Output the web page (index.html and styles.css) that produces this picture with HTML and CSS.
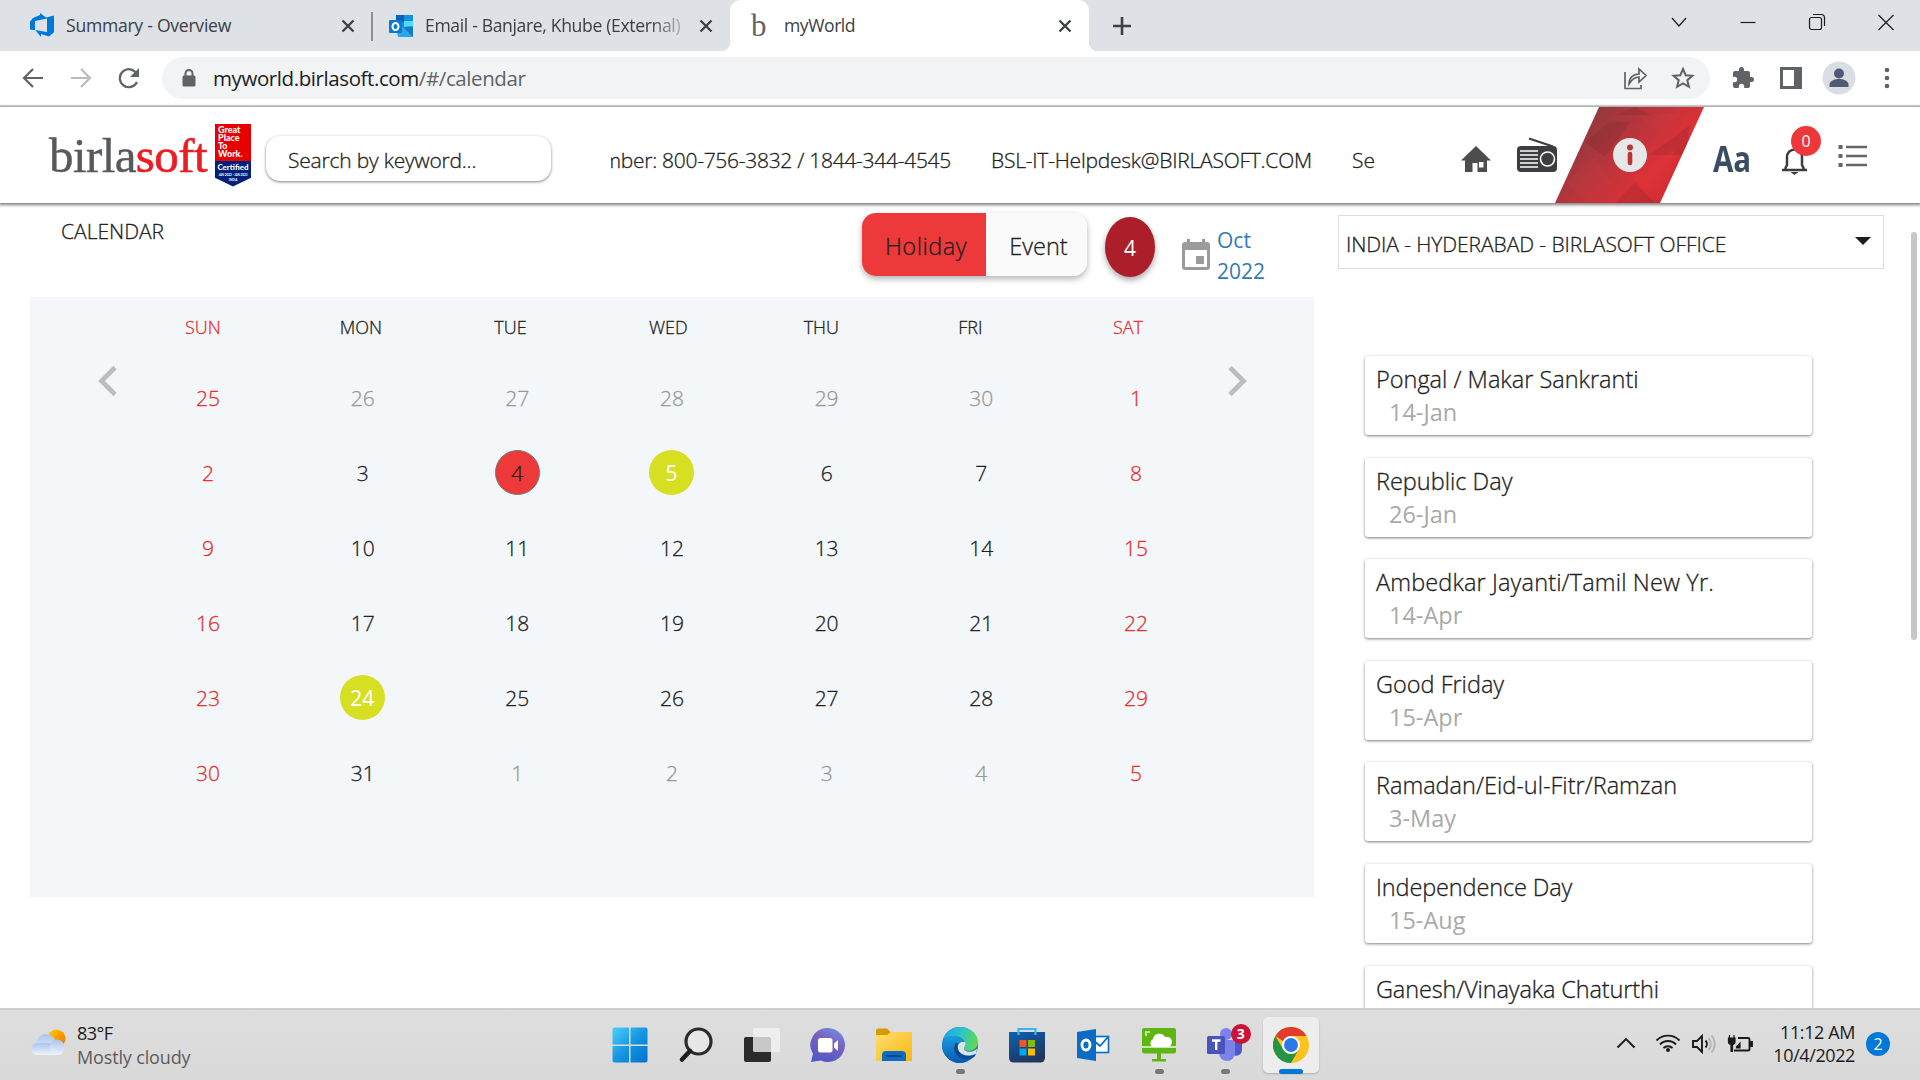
FILE: index.html
```html
<!DOCTYPE html>
<html lang="en">
<head>
<meta charset="utf-8">
<title>myWorld</title>
<link rel="stylesheet" href="styles.css">
</head>
<body>
<div class="tabs">
  <div class="tab tab-first">
    <svg class="fav" width="26" height="26" viewBox="0 0 26 26"><path fill="#0078d7" d="M1 8.500 4 5l7-3V0l6 4.500L25 2.500v16.800l-5 4.200-8-2.600V24l-5.500-6.800L1 16.500zM6 8v9l12 2V5.500z"/></svg>
    <span class="tab-title s-sum">Summary - Overview</span>
    <svg class="x" width="14" height="14" viewBox="0 0 14 14"><path d="M1.500 1.500l11 11M12.500 1.500l-11 11"/></svg>
  </div>
  <div class="tab tab-second">
    <svg class="fav" width="25" height="24" viewBox="0 0 25 24"><rect x="7" y="1" width="17" height="13" fill="#1490df"/><rect x="7" y="1" width="8" height="7" fill="#0364b8"/><rect x="15" y="7" width="9" height="7" fill="#50d9ff"/><path fill="#28a8ea" d="M7 13h17v10H9z"/><path fill="#0a5dae" d="M14 13l10 10V12z" opacity=".6"/><rect y="6" width="13" height="13" rx="1" fill="#0f78d4"/><ellipse cx="6.500" cy="12.500" rx="3" ry="3.500" fill="none" stroke="#fff" stroke-width="2"/></svg>
    <span class="tab-title fade s-mail">Email - Banjare, Khube (External)</span>
    <svg class="x" width="14" height="14" viewBox="0 0 14 14"><path d="M1.500 1.500l11 11M12.500 1.500l-11 11"/></svg>
  </div>
  <div class="tab tab-active">
    <span class="fav-b">b</span>
    <span class="tab-title s-my">myWorld</span>
    <svg class="x" width="14" height="14" viewBox="0 0 14 14"><path d="M1.500 1.500l11 11M12.500 1.500l-11 11"/></svg>
  </div>
  <svg class="plus" width="18" height="18" viewBox="0 0 18 18"><path d="M9 0v18M0 9h18" stroke="#3c4043" stroke-width="2.600"/></svg>
  <div class="winctl">
    <svg width="20" height="20" viewBox="0 0 20 20"><path d="M3 6l7 8 7-8"/></svg>
    <svg width="20" height="20" viewBox="0 0 20 20"><path d="M2.500 10.500h15"/></svg>
    <svg width="20" height="20" viewBox="0 0 20 20"><rect x="2.500" y="5.500" width="12" height="12" rx="2"/><path d="M6 2.500h8a3.500 3.500 0 0 1 3.500 3.500v8"/></svg>
    <svg width="20" height="20" viewBox="0 0 20 20"><path d="M2.500 3l15 15M17.500 3l-15 15"/></svg>
  </div>
</div>

<div class="toolbar">
  <svg class="nav" width="24" height="24" viewBox="0 0 24 24"><path d="M22 12H4M12 3l-9 9 9 9"/></svg>
  <svg class="nav dim" width="24" height="24" viewBox="0 0 24 24"><path d="M2 12h18M12 3l9 9-9 9"/></svg>
  <svg class="nav" width="24" height="24" viewBox="0 0 24 24"><path d="M20 16a9 9 0 1 1-.5-8.500"/><path d="M22 2v9h-9z" fill="#5f6368" stroke="none"/></svg>
  <div class="omnibox">
    <svg width="14" height="18" viewBox="0 0 14 18"><rect x="0.500" y="6.500" width="13" height="11" rx="1.500" fill="#5f6368"/><path d="M3.500 7V4.500a3.500 3.500 0 0 1 7 0V7" fill="none" stroke="#5f6368" stroke-width="2"/></svg>
    <span class="url">myworld.birlasoft.com<span class="path">/#/calendar</span></span>
    <svg class="share" width="25" height="24" viewBox="0 0 25 24"><path d="M2 6v16.500h16V19M6 18c0-6 4-10 10-10V3l7 6.500-7 6.500v-5c-4 0-7 2-10 7z" fill="none" stroke="#5f6368" stroke-width="1.700"/></svg>
    <svg width="24" height="24" viewBox="0 0 24 24"><path d="M12 3l2.700 6.200 6.700.6-5.100 4.400 1.600 6.600L12 17.300l-5.900 3.500 1.600-6.600-5.100-4.400 6.700-.6z" fill="none" stroke="#5f6368" stroke-width="2"/></svg>
  </div>
  <svg class="ext" width="24" height="24" viewBox="0 0 24 24"><path fill="#5f6368" d="M20.500 11H19V7c0-1.100-.9-2-2-2h-4V3.500a2.500 2.500 0 0 0-5 0V5H4c-1.100 0-2 .9-2 2v3.800h1.500a2.700 2.700 0 0 1 0 5.400H2V20c0 1.100.9 2 2 2h3.800v-1.500a2.700 2.700 0 0 1 5.400 0V22H17c1.100 0 2-.9 2-2v-4h1.500a2.500 2.500 0 0 0 0-5z"/></svg>
  <svg class="panelbtn" width="22" height="22" viewBox="0 0 22 22"><path fill="#5f6368" fill-rule="evenodd" d="M0 0h22v22H0zM3 3v16h11V3z"/></svg>
  <svg class="avatar" width="34" height="34" viewBox="0 0 34 34"><circle cx="17" cy="17" r="16.500" fill="#dadde4"/><circle cx="17" cy="12.500" r="5" fill="#4f5b73"/><path d="M7.500 26v-2.500c0-3.500 5-5.500 9.500-5.500s9.500 2 9.500 5.500V26z" fill="#4f5b73"/></svg>
  <svg class="dots" width="6" height="22" viewBox="0 0 6 22" fill="#5f6368"><circle cx="3" cy="3" r="2.300"/><circle cx="3" cy="11" r="2.300"/><circle cx="3" cy="19" r="2.300"/></svg>
</div>

<header class="head">
  <div class="logo">birla<b>soft</b></div>
  <div class="gptw"><div class="g-red">Great<br>Place<br>To<br>Work.</div><div class="g-blue"><b>Certified</b><i>JAN 2022 - JAN 2023</i><i>INDIA</i></div></div>
  <div class="search">Search by keyword...</div>
  <div class="marquee"><div class="mq"><span class="s-num">mber: 800-756-3832 / 1844-344-4545</span><span class="s-bsl">BSL-IT-Helpdesk@BIRLASOFT.COM</span><span class="s-se">Se</span></div></div>
  <svg class="home" width="30" height="26" viewBox="0 0 30 26"><path fill="#4d4d4f" fill-rule="evenodd" d="M15 0 30 14.500h-4V26h-9.500V17H11.500v9H4V14.500H0zM18 16v5.500h4.500V16z"/></svg>
  <svg class="radio" width="42" height="36" viewBox="0 0 42 36"><path d="M13 1.500l24 8" stroke="#3d3d3f" stroke-width="2.200"/><rect x="1" y="9" width="40" height="26" rx="4" fill="#3d3d3f"/><path d="M4 14h18M4 18h18M4 22h18M4 26h18M4 30h18" stroke="#fff" stroke-width="1.700"/><circle cx="31.500" cy="22" r="7" fill="none" stroke="#fff" stroke-width="1.600"/></svg>
  <svg class="ribbon" width="150" height="96" viewBox="0 0 150 96"><defs><linearGradient id="rb" x1="0" y1="0" x2="1" y2=".55"><stop offset=".15" stop-color="#8a3a40"/><stop offset=".5" stop-color="#b7353b"/><stop offset=".8" stop-color="#dd3037"/><stop offset="1" stop-color="#c92a31"/></linearGradient><clipPath id="rc"><path d="M44 0h105L105 96H0z"/></clipPath></defs><g clip-path="url(#rc)"><rect width="150" height="96" fill="url(#rb)"/><path d="M30 35l25-20 20 0-25 35zM95 48l40-30-5 30zM60 96l20-20 20 20zM60 8h36L80 0z" fill="#6b2228" opacity=".2"/><path d="M75 70l45-30-10 56zM85 10l22 20 20-25zM10 75l30-25 20 30-30 16z" fill="#f0484d" opacity=".1"/></g><circle cx="75" cy="48" r="17" fill="#e6e7e8"/><circle cx="75" cy="40.500" r="3" fill="#c0323a"/><path d="M75 47v9" stroke="#c0323a" stroke-width="4.600" stroke-linecap="round"/></svg>
  <span class="aa">Aa</span>
  <div class="bell">
    <svg width="27" height="30" viewBox="0 0 27 30"><path d="M1 25h25M4.500 25v-2l1.500-3v-8a7.500 7.500 0 0 1 15 0v8l1.500 3v2" fill="none" stroke="#3d3d3f" stroke-width="2.500"/><path d="M9.500 27h8l-4 3z" fill="#3d3d3f"/></svg>
    <span class="count">0</span>
  </div>
  <svg class="list" width="29" height="26" viewBox="0 0 29 26" fill="none" stroke="#666"><path d="M8 4h21M8 13h21M8 22h21" stroke-width="2.400"/><path d="M.5 4h4M.5 13h4M.5 22h4" stroke-width="4"/></svg>
</header>

<main class="page">
  <section class="left">
    <div class="bar">
      <span class="heading">CALENDAR</span>
      <div class="toggle"><span class="on">Holiday</span><span class="off">Event</span></div>
      <div class="today">4</div>
      <svg class="calicon" width="28" height="31" viewBox="0 0 28 31"><path fill="#9b9b9b" fill-rule="evenodd" d="M5 0h3v3h12V0h3v3h2a3 3 0 0 1 3 3v22a3 3 0 0 1-3 3H3a3 3 0 0 1-3-3V6a3 3 0 0 1 3-3h2zM3 11v17h22V11z"/><rect x="14" y="17" width="8" height="8" fill="#9b9b9b"/></svg>
      <div class="month">Oct<br>2022</div>
    </div>
    <div class="calendar">
      <svg class="prev" width="19" height="30" viewBox="0 0 19 30"><path d="M17 1.500L3.500 15 17 28.500" fill="none" stroke="#bdbdbd" stroke-width="4.800"/></svg>
      <div class="month-grid">
        <div class="week names"><span class="r">SUN</span><span>MON</span><span>TUE</span><span>WED</span><span>THU</span><span>FRI</span><span class="r">SAT</span></div>
        <div class="week"><span class="r">25</span><span class="o">26</span><span class="o">27</span><span class="o">28</span><span class="o">29</span><span class="o">30</span><span class="r">1</span></div>
        <div class="week"><span class="r">2</span><span>3</span><span class="now">4</span><span class="hol">5</span><span>6</span><span>7</span><span class="r">8</span></div>
        <div class="week"><span class="r">9</span><span>10</span><span>11</span><span>12</span><span>13</span><span>14</span><span class="r">15</span></div>
        <div class="week"><span class="r">16</span><span>17</span><span>18</span><span>19</span><span>20</span><span>21</span><span class="r">22</span></div>
        <div class="week"><span class="r">23</span><span class="hol">24</span><span>25</span><span>26</span><span>27</span><span>28</span><span class="r">29</span></div>
        <div class="week"><span class="r">30</span><span>31</span><span class="o">1</span><span class="o">2</span><span class="o">3</span><span class="o">4</span><span class="r">5</span></div>
      </div>
      <svg class="next" width="19" height="30" viewBox="0 0 19 30"><path d="M2 1.500L15.500 15 2 28.500" fill="none" stroke="#bdbdbd" stroke-width="4.800"/></svg>
    </div>
  </section>
  <aside class="right">
    <div class="select"><span>INDIA - HYDERABAD - BIRLASOFT OFFICE</span><svg width="16" height="8" viewBox="0 0 16 8"><path d="M0 0h16L8 8z" fill="#1d1d1d"/></svg></div>
    <div class="cards">
      <div class="card"><span>Pongal / Makar Sankranti</span><small>14-Jan</small></div>
      <div class="card"><span>Republic Day</span><small>26-Jan</small></div>
      <div class="card"><span class="wide">Ambedkar Jayanti/Tamil New Yr.</span><small>14-Apr</small></div>
      <div class="card"><span>Good Friday</span><small>15-Apr</small></div>
      <div class="card"><span>Ramadan/Eid-ul-Fitr/Ramzan</span><small>3-May</small></div>
      <div class="card"><span class="tight">Independence Day</span><small>15-Aug</small></div>
      <div class="card"><span class="tight">Ganesh/Vinayaka Chaturthi</span></div>
    </div>
  </aside>
  <div class="scroll"></div>
</main>

<footer class="taskbar">
  <div class="weather">
    <svg width="36" height="28" viewBox="0 0 36 28"><defs><linearGradient id="sun" x1="0" y1="0" x2="1" y2="1"><stop offset="0" stop-color="#ffd000"/><stop offset="1" stop-color="#f06a00"/></linearGradient><linearGradient id="cl" x1="0" y1="0" x2="0" y2="1"><stop offset="0" stop-color="#a9c6ee"/><stop offset="1" stop-color="#eef3fa"/></linearGradient></defs><circle cx="25.500" cy="9.500" r="9" fill="url(#sun)"/><circle cx="15" cy="15" r="10" fill="url(#cl)"/><rect x="0" y="14" width="33" height="12" rx="6" fill="url(#cl)"/><circle cx="26" cy="18" r="7.500" fill="url(#cl)"/></svg>
    <div class="wtext"><span class="s-f">83°F</span><span class="wdesc">Mostly cloudy</span></div>
  </div>
  <div class="apps">
    <span class="app"><svg width="36" height="36" viewBox="0 0 36 36"><defs><linearGradient id="w" x1="0" y1="0" x2="1" y2="1"><stop offset="0" stop-color="#4fd0ff"/><stop offset=".5" stop-color="#1596e2"/><stop offset="1" stop-color="#0072cf"/></linearGradient></defs><path fill="url(#w)" d="M2.500 .5h14.500v17H.5v-15a2 2 0 0 1 2-2zM18.500.5h15a2 2 0 0 1 2 2v15h-17zM.5 19h16.500v16.500h-14.500a2 2 0 0 1-2-2zM18.500 19h17v14.500a2 2 0 0 1-2 2h-15z"/></svg></span>
    <span class="app"><svg width="36" height="36" viewBox="0 0 36 36"><circle cx="20.500" cy="14.500" r="12.500" fill="#e6e6e6" stroke="#2b2b2b" stroke-width="3.200"/><path d="M12 24l-8 8.500" stroke="#1d1d1d" stroke-width="4.600" stroke-linecap="round"/></svg></span>
    <span class="app"><svg width="36" height="36" viewBox="0 0 36 36"><rect x="0" y="10" width="27" height="25" rx="2" fill="#2b2b2b"/><rect x="9" y="1" width="27" height="24" rx="1.500" fill="#f4f4f4" opacity=".78"/></svg></span>
    <span class="app"><svg width="36" height="36" viewBox="0 0 36 36"><defs><linearGradient id="ch" x1=".8" y1="0" x2=".3" y2="1"><stop offset="0" stop-color="#6f8fe8"/><stop offset=".4" stop-color="#7a62bd"/><stop offset="1" stop-color="#5158c8"/></linearGradient></defs><path fill="url(#ch)" d="M18 1a17 17 0 1 1-7 32.500L1 35l2-8A17 17 0 0 1 18 1z"/><rect x="8" y="11" width="14.500" height="14.500" rx="2.500" fill="#fff"/><path d="M24 16.500l4-3.500v11l-4-3.500z" fill="#fff"/></svg></span>
    <span class="app"><svg width="36" height="36" viewBox="0 0 36 36"><defs><linearGradient id="fo" x1="0" y1="0" x2="1" y2="1"><stop offset="0" stop-color="#ffdd70"/><stop offset="1" stop-color="#f9b80f"/></linearGradient></defs><path d="M0 4a2.500 2.500 0 0 1 2.500-2.500H11l4 4h19a2 2 0 0 1 2 2V12H0z" fill="#d99a00"/><path d="M0 8h11l4-3h21v29H0z" fill="url(#fo)"/><path d="M6 34v-6a4 4 0 0 1 4-4h16a4 4 0 0 1 4 4v6z" fill="#0a6cc4"/><path d="M11 29h14" stroke="#06427f" stroke-width="2" stroke-linecap="round"/></svg></span>
    <span class="app run"><svg width="36" height="36" viewBox="0 0 36 36"><defs><linearGradient id="e1" x1="0" y1=".3" x2="1" y2=".5"><stop offset="0" stop-color="#1fa4e8"/><stop offset=".5" stop-color="#2cc5c9"/><stop offset="1" stop-color="#63d94a"/></linearGradient><linearGradient id="e2" x1="0" y1="0" x2="0" y2="1"><stop offset="0" stop-color="#1b9de2"/><stop offset="1" stop-color="#0a58b0"/></linearGradient></defs><circle cx="18" cy="18" r="18" fill="#0d74cf"/><path d="M1 13C3 5 10 0 18 0c10 0 18 7 18 15 0 6-5 9-9 9-3 0-5-1-5-2.500 0-1 1-1.500 1-4C23 13 18 9 12 9 6 9 3 11 1 13z" fill="url(#e1)"/><path d="M.5 15C2 11.500 6 9 11 9c6 0 11 4 11 7-6-2-9 2-8.500 6 .5 7 7 11 13 11-3 2-6 3-8.500 3C8 36 0 28 0 18z" fill="url(#e2)"/><path d="M14 16c-2 2-3 6 0 11 4 6 12 7 18 3 1.500-1.300 2-3 2-3-8 4-14 1-17-3-2-3-1.500-6-1-8z" fill="#0c4a94"/><path d="M23 15c1.500 3-1 5-1 6.500 0 2 3 3.500 6 3.200 3 0 5.500-1.700 7-3.200l-.8 5c-7 3.500-13.500 2.500-17-2-2.500-4-1.500-8 2-9.500z" fill="#dfe2e4"/></svg></span>
    <span class="app"><svg width="36" height="36" viewBox="0 0 36 36"><defs><linearGradient id="st" x1="0" y1="0" x2=".5" y2="1"><stop offset="0" stop-color="#0b62b4"/><stop offset="1" stop-color="#20365f"/></linearGradient></defs><path d="M0 5h36v26a4.500 4.500 0 0 1-4.500 4.500h-27A4.500 4.500 0 0 1 0 31z" fill="url(#st)"/><path d="M9.500 8V2h17v6" fill="none" stroke="#35b6f2" stroke-width="2.200"/><path d="M10.500 13h7v7h-7z" fill="#f35325"/><path d="M19 13h7v7h-7z" fill="#81bc06"/><path d="M10.500 21.500h7v7h-7z" fill="#05a6f0"/><path d="M19 21.500h7v7h-7z" fill="#ffba08"/></svg></span>
    <span class="app"><svg width="36" height="36" viewBox="0 0 36 36"><rect x="18" y="9.500" width="15.500" height="16" fill="#fff" stroke="#0a6cc4" stroke-width="1.600"/><path d="M18 13l7 6 8-9" fill="none" stroke="#0a6cc4" stroke-width="1.800"/><path d="M2 5l19-3v32L2 31z" fill="#0a6cc4"/><ellipse cx="11" cy="18" rx="4" ry="5" fill="none" stroke="#fff" stroke-width="2.800"/></svg></span>
    <span class="app run"><svg width="36" height="36" viewBox="0 0 36 36"><rect x="1" y="1" width="34" height="25.500" rx="2" fill="#5fb613"/><path d="M1 20h34" stroke="#cde6b5" stroke-width="2"/><path d="M5 9V5h4" stroke="#e4f2d6" stroke-width="1.600" fill="none"/><path d="M11 20a5 5 0 0 1 1-8 6.500 6.500 0 0 1 12-2 5.200 5.200 0 0 1 3.500 10z" fill="#fff"/><path d="M16 26h4v6h5v2.500H11V32h5z" fill="#5fb613"/></svg></span>
    <span class="app run"><svg width="36" height="36" viewBox="0 0 36 36"><circle cx="19" cy="7" r="6" fill="#7b83eb"/><path d="M26 12h9v11a6 6 0 0 1-9 5z" fill="#5059c9"/><path d="M12 13h16v13a8 8 0 0 1-16 0z" fill="#7b83eb"/><rect x="0" y="9" width="18" height="18" rx="1.500" fill="#4b53bc"/><path d="M5 13.500h8.500M9.200 13.500V23" stroke="#fff" stroke-width="2.400"/></svg><span class="tb">3</span></span>
    <span class="app run current"><svg width="36" height="36" viewBox="0 0 36 36"><circle cx="18" cy="18" r="18" fill="#fcc31e"/><path d="M2.400 9A18 18 0 0 1 33.600 9H18a9 9 0 0 0-8 5z" fill="#e33b2e"/><path d="M2.400 9A18 18 0 0 0 18 36l7.800-13.500A9 9 0 0 1 10.200 22.500z" fill="#229443"/><circle cx="18" cy="18" r="9" fill="#fff"/><circle cx="18" cy="18" r="7" fill="#2b79e8"/></svg></span>
  </div>
  <div class="tray">
    <svg class="up" width="20" height="12" viewBox="0 0 20 12"><path d="M1.500 10.500L10 2l8.500 8.500"/></svg>
    <svg class="wifi" width="26" height="20" viewBox="0 0 26 20"><path d="M1.500 7.500a16 16 0 0 1 23 0M5 11.500a11 11 0 0 1 16 0M8.500 15a6.500 6.500 0 0 1 9 0"/><circle cx="13" cy="17" r="2" fill="#1b1b1b" stroke="none"/></svg>
    <svg class="vol" width="26" height="20" viewBox="0 0 26 20"><path d="M2 7h4l5-5v16l-5-5H2zM14.500 6.500a5 5 0 0 1 0 7"/><path d="M17.500 4a9 9 0 0 1 0 12M20.500 1.500a13 13 0 0 1 0 17" stroke="#b5b5b5"/></svg>
    <svg class="bat" width="26" height="20" viewBox="0 0 26 20"><path d="M11 4h10a1.500 1.500 0 0 1 1.500 1.500v9A1.500 1.500 0 0 1 21 16.500H7"/><path d="M23 8h2v4h-2z" fill="#1b1b1b"/><path d="M1.500 4h6.500v3.500a3 3 0 0 1-2.500 3v7H4v-7a3 3 0 0 1-2.500-3zM2.500 1v3M7 1v3M9.500 13l3.500-4v5h-3.500z" fill="#1b1b1b" stroke-width="1.200"/></svg>
    <div class="clock"><span>11:12 AM</span><span>10/4/2022</span></div>
    <span class="notif">2</span>
  </div>
</footer>
</body>
</html>
```
FILE: styles.css
```css
* { box-sizing: border-box; }
body {
  margin: 0;
  width: 1920px;
  height: 1080px;
  overflow: hidden;
  display: flex;
  flex-direction: column;
  background: #fff;
  color: #222;
  font-family: "Open Sans", "Noto Sans", sans-serif;
  font-size: 21px;
  white-space: nowrap;
}
svg { display: block; flex: none; }

/* browser tabs */
.tabs { height: 51px; flex: none; display: flex; align-items: center; background: #dee1e6; }
.tab { display: flex; align-items: center; height: 51px; }
.tab-title { font-size: 17.600px; color: #3c4043; margin: -1px auto 0 0; }
.s-sum { letter-spacing: -.27px; }
.s-mail { letter-spacing: -.36px; }
.s-my { letter-spacing: -.45px; }
.tab .x { stroke: #3c4043; stroke-width: 2.300; fill: none; }
.tab-first { width: 372px; padding: 0 17px 0 29px; gap: 11px; }
.tab-second { width: 358px; padding: 0 17px 0 17px; gap: 11px; position: relative; }
.tab-second::before { content: ""; position: absolute; left: -1px; top: 12px; width: 1.500px; height: 29px; background: #8b8e93; }
.fade { -webkit-mask-image: linear-gradient(90deg, #000 88%, rgba(0,0,0,.3)); mask-image: linear-gradient(90deg, #000 88%, rgba(0,0,0,.3)); }
.tab-active { width: 359px; background: #fff; border-radius: 11px 11px 0 0; padding: 0 17px 0 21px; gap: 16px; position: relative; }
.tab-active::before, .tab-active::after { content: ""; position: absolute; bottom: 0; width: 9px; height: 9px; }
.tab-active::before { left: -9px; background: radial-gradient(circle at 0 0, transparent 9px, #fff 9.500px); }
.tab-active::after { right: -9px; background: radial-gradient(circle at 100% 0, transparent 9px, #fff 9.500px); }
.fav-b { font: 31px/40px "Liberation Serif", serif; color: #666; width: 17px; }
.plus { margin-left: 24px; }
.winctl { margin-left: auto; display: flex; gap: 49px; padding-right: 24px; margin-top: -7px; }
.winctl svg { fill: none; stroke: #1b1b1b; stroke-width: 1.200; height: 22px; }

/* address bar */
.toolbar { height: 56px; flex: none; display: flex; align-items: center; padding-left: 21px; border-bottom: 2px solid #dadbdd; }
.nav { fill: none; stroke: #5f6368; stroke-width: 2.200; margin-right: 24px; }
.nav.dim { stroke: #b9bbbe; }
.omnibox { width: 1548px; height: 42px; margin-left: -3px; border-radius: 21px; background: #f1f3f4; display: flex; align-items: center; padding: 0 15px 0 20px; }
.url { margin: 0 auto 0 17px; color: #202124; font-size: 20.500px; letter-spacing: -.41px; }
.url .path { color: #5f6368; }
.share { margin-right: 23px; }
.ext { margin-left: 21px; }
.panelbtn { margin-left: 25px; }
.avatar { margin-left: 20px; }
.dots { margin-left: 28px; }

/* site header */
.head { height: 96px; flex: none; display: flex; align-items: center; padding-left: 49px; position: relative; z-index: 1; background: #fff; box-shadow: 0 1px 3px 1px rgba(0,0,0,.5); font-weight: 300; }
.logo { font: 49px/60px "Liberation Serif", serif; letter-spacing: -.6px; color: #58595b; width: 166px; -webkit-text-stroke: .4px #58595b; margin-top: 2px; }
.logo b { font-weight: 400; color: #ed1c24; -webkit-text-stroke: .6px #ed1c24; }
.gptw { width: 36px; height: 63px; clip-path: polygon(0 0,100% 0,100% 86%,50% 100%,0 86%); display: flex; flex-direction: column; color: #fff; font-family: Lato, sans-serif; }
.g-red { height: 37px; background: #e60000; font-size: 9px; line-height: 8.300px; font-weight: 900; padding: 2px 0 0 3px; }
.g-blue { flex: 1; background: #02207a; display: flex; flex-direction: column; align-items: center; padding-top: 1px; }
.g-blue b { font-size: 7.900px; line-height: 11px; font-weight: 900; }
.g-blue i { font: 700 3px/4px Lato, sans-serif; margin-bottom: 1.500px; }
.search { width: 285px; height: 45px; margin-left: 15px; padding: 2px 0 0 22px; border-radius: 14px; display: flex; align-items: center; box-shadow: 0 1px 3px rgba(0,0,0,.5); margin-top: 7px; letter-spacing: -.2px; -webkit-text-stroke: .3px; }
.marquee { width: 800px; margin-left: 60px; margin-top: 10px; overflow: hidden; -webkit-text-stroke: .3px; }
.mq { display: flex; margin-left: -8.500px; gap: 40px; }
.s-num { letter-spacing: -.28px; }
.s-bsl { letter-spacing: -.22px; }
.home { margin: 7px 0 0 50px; }
.radio { margin-left: 25px; }
.ribbon { margin-left: -3px; }
.aa { font-weight: 700; font-size: 36px; color: #3b4d63; margin: 7px 0 0 8px; width: 61px; transform: scaleX(.82); transform-origin: left; }
.bell { position: relative; margin: 10px 0 0 7px; }
.count { position: absolute; left: 10px; top: -19px; width: 30px; height: 30px; border-radius: 50%; background: #ee3739; color: #fff; font-size: 16px; font-weight: 400; line-height: 31px; text-align: center; }
.list { margin: 2px 0 0 30px; }

/* content */
.page { flex: 1; min-height: 0; display: flex; padding-left: 30px; overflow: hidden; font-weight: 300; -webkit-text-stroke: .3px; }
.left { width: 1284px; }
.bar { height: 94px; display: flex; align-items: flex-start; padding-left: 31px; }
.heading { margin-top: 14px; width: 801px; line-height: 29px; }
.toggle { display: flex; margin-top: 10px; width: 225px; height: 63px; border-radius: 14px; box-shadow: 0 3px 6px rgba(0,0,0,.3); font-size: 23.500px; line-height: 66px; text-align: center; }
.on { width: 124px; background: #ee393a; border-radius: 14px 0 0 14px; padding-left: 4px; letter-spacing: .5px; }
.off { width: 101px; background: #fafafa; border-radius: 0 14px 14px 0; padding-left: 4px; }
.today { width: 50px; height: 60px; margin: 14px 0 0 18px; border-radius: 50%; background: #ad1e2b; color: #fff; font-weight: 400; line-height: 62px; text-align: center; box-shadow: 0 3px 6px rgba(0,0,0,.35); -webkit-text-stroke: 0; }
.calicon { margin: 36px 0 0 27px; }
.month { margin: 22px 0 0 7px; line-height: 31px; color: #337ab7; font-weight: 400; -webkit-text-stroke: 0; }
.calendar { height: 600px; background: #f4f7fa; display: flex; }
.prev { margin: 69px 0 0 68px; }
.next { margin-top: 69px; }
.month-grid { width: 1111px; padding-left: 68px; }
.week { display: grid; grid-template-columns: repeat(7, 154.670px); height: 75px; align-items: start; }
.week span { width: 46px; height: 45px; line-height: 46px; text-align: center; }
.week.names { height: 78px; padding-top: 15px; font-size: 18px; }
.week.names span { line-height: 30px; text-align: left; width: auto; }
.week .r { color: #e5302f; }
.week .o { color: #999; }
.week .now { width: 45px; background: #ee393a; border: 1px solid #777; border-radius: 50%; line-height: 44px; margin-left: .5px; }
.week .hol { width: 45px; background: #d7df23; color: #fff; border-radius: 50%; font-weight: 400; -webkit-text-stroke: 0; }

.right { width: 570px; padding: 12px 0 0 24px; }
.select { width: 546px; height: 54px; border: 1px solid #ddd; display: flex; align-items: center; justify-content: space-between; padding: 4px 12px 0 7px; letter-spacing: -.07px; }
.select svg { margin-top: -7px; }
.cards { margin: 87px 0 0 27px; width: 447px; display: flex; flex-direction: column; gap: 22.600px; }
.card { height: 79px; flex: none; border-radius: 3px; box-shadow: 0 1px 3px rgba(0,0,0,.5); padding: 6px 11px; font-size: 23.500px; line-height: 34px; display: flex; flex-direction: column; }
.card .wide { letter-spacing: .14px; }
.card .tight { letter-spacing: -.13px; }
.card small { color: #a9a9a9; font-size: 23.500px; font-weight: 400; -webkit-text-stroke: 0; padding-left: 13px; line-height: 33px; }
.scroll { width: 6px; height: 408px; margin: 29px 0 0 27px; border-radius: 3px; background: #c6c6c6; }

/* taskbar */
.taskbar { height: 72px; flex: none; display: flex; background: linear-gradient(#dedede, #d9d9d9); border-top: 2px solid #cfcfcf; position: relative; z-index: 2; color: #1b1b1b; font-size: 18px; }
.weather { width: 597px; padding: 19px 0 0 31px; display: flex; gap: 10px; }
.wtext { display: flex; flex-direction: column; line-height: 24px; margin-top: -8px; }
.s-f { letter-spacing: -.5px; }
.wdesc { color: #5b5b5b; letter-spacing: -.15px; }
.apps { display: flex; }
.app { width: 66.100px; height: 70px; padding: 17px 15px; position: relative; }
.run::after { content: ""; position: absolute; left: 29px; top: 59px; width: 9px; height: 5px; border-radius: 3px; background: #777; }
.current::before { content: ""; position: absolute; left: 5px; top: 7px; width: 56px; height: 56px; border-radius: 5px; background: #ededed; box-shadow: 0 1px 2px rgba(0,0,0,.2); }
.current svg { position: relative; }
.current::after { left: 21px; width: 24px; background: #0078d7; }
.tb { position: absolute; left: 39px; top: 14px; width: 20px; height: 20px; border-radius: 50%; background: #cc1236; color: #fff; font-weight: 700; font-size: 14px; line-height: 20px; text-align: center; }
.tray { margin-left: auto; padding-right: 30px; display: flex; align-items: flex-start; }
.tray svg { fill: none; stroke: #1b1b1b; stroke-width: 1.900; }
.up { margin: 27px 19px 0 0; }
.wifi { margin: 23px 10px 0 0; }
.vol { margin: 24px 10px 0 0; }
.bat { margin: 24px 17px 0 0; }
.clock { width: 85px; display: flex; flex-direction: column; text-align: right; line-height: 23px; padding-top: 11px; letter-spacing: -.4px; }
.notif { width: 24px; height: 24px; margin: 22px 0 0 11px; border-radius: 50%; background: #0078d7; color: #fff; font-size: 16px; line-height: 24px; text-align: center; }
```
